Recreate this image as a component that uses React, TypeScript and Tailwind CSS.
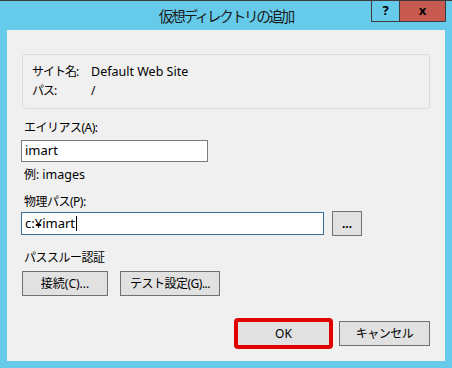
const FONT = { fontFamily: '"Noto Sans", "Noto Sans CJK JP", sans-serif' };

function Btn({ children, className = '' }: { children: React.ReactNode; className?: string }) {
  return (
    <div
      className={`flex items-center justify-center bg-[#e1e1e1] border border-[#707070] text-[12px] text-black ${className}`}
    >
      {children}
    </div>
  );
}

export default function App() {
  return (
    <div className="w-[452px] h-[368px] bg-[#66cbea] border-t border-[#3c3c3c] flex flex-col overflow-hidden" style={FONT}>
      {/* Title bar */}
      <div className="relative h-[29px] flex items-center justify-center">
        <span className="text-[14.5px] text-[#1a1a1a] tracking-[-2.2px] mt-[2px]">仮想ディレクトリの追加</span>
        <div className="absolute top-[-1px] right-[6px] flex">
          <div className="w-[29px] h-[22px] border border-[#3c3c3c] flex items-center justify-center text-[13px] font-bold text-black">?</div>
          <div className="w-[46px] h-[22px] bg-[#c75a50] border border-l-0 border-[#3c3c3c] flex items-center justify-center text-[13px] font-bold text-black">x</div>
        </div>
      </div>

      {/* Client area */}
      <div className="mx-[7px] h-[331px] bg-[#f0f0f0] flex flex-col pl-[14px] pr-[15px] text-[12px] text-black">
        <div className="mt-[24px] ml-[1px] h-[55px] border border-[#dcdcdc] rounded-[3px] pt-[9px] pl-[9px] flex flex-col gap-[3px] leading-[16px]">
          <div className="flex">
            <span className="w-[59px] tracking-[-1px]">サイト名:</span>
            <span className="text-[12.5px]">Default Web Site</span>
          </div>
          <div className="flex">
            <span className="w-[59px] tracking-[-1px]">パス:</span>
            <span>/</span>
          </div>
        </div>

        <div className="mt-[11px] pl-[3px] leading-[16px] tracking-[-0.5px]">エイリアス(A):</div>
        <div className="mt-[4px] w-[187px] h-[22px] bg-white border border-[#7a7a7a] flex items-center pl-[3px] text-[13px]">imart</div>

        <div className="mt-[5px] pl-[3px] leading-[16px]">例: <span className="text-[12.5px]">images</span></div>

        <div className="mt-[11px] pl-[3px] leading-[16px] tracking-[-0.5px]">物理パス(P):</div>
        <div className="mt-[1px] flex items-center gap-[8px]">
          <div className="w-[303px] h-[23px] bg-white border border-[#3c6e9c] flex items-center pl-[3px] text-[13px]">
            c:¥imart<span className="inline-block w-[1px] h-[15px] bg-black ml-[1px]" />
          </div>
          <Btn className="w-[30px] h-[25px] font-bold text-[#3a3a3a]">...</Btn>
        </div>

        <div className="mt-[14px] pl-[3px] leading-[16px] tracking-[-0.5px]">パススルー認証</div>
        <div className="mt-[5px] pl-[1px] flex gap-[12px]">
          <Btn className="w-[86px] h-[25px]">接続(C)...</Btn>
          <Btn className="w-[100px] h-[25px] tracking-[-0.5px]">テスト設定(G)...</Btn>
        </div>

        <div className="mt-[22px] flex justify-end items-center gap-[6px]">
          <div className="w-[99px] h-[31px] rounded-[4px] border-[4px] border-[#e00000] bg-[#e1e1e1] flex items-center justify-center text-[12px]">
            OK
          </div>
          <Btn className="w-[91px] h-[25px] tracking-[-0.5px]">キャンセル</Btn>
        </div>
      </div>
    </div>
  );
}
